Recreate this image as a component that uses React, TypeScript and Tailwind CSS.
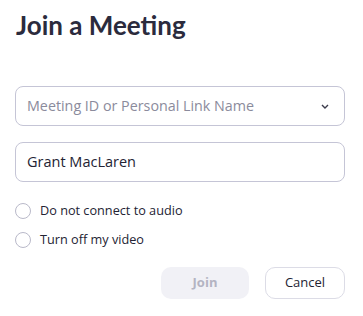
import React from "react";

export default function App() {
  return (
    <div className="w-[363px] h-[316px] bg-white pl-[15px] pr-[18px] pt-[8px]" style={{ fontFamily: '"Segoe UI", "Open Sans", "Noto Sans", sans-serif' }}>
      <h1 className="text-[26px] leading-[34px] font-bold text-[#2b2b3d] pl-[1px]" style={{ fontFamily: 'Lato, sans-serif' }}>
        Join a Meeting
      </h1>
      <div className="mt-[44px] h-[40px] w-[330px] rounded-[8px] border border-[#c5c5d6] flex items-center pl-[11px] pr-[14px]">
        <span className="flex-1 text-[14.3px] text-[#8b8b9c]">Meeting ID or Personal Link Name</span>
        <svg width="8" height="5" viewBox="0 0 8 5" className="mr-[1px]">
          <path d="M1 1 L4 4 L7 1" fill="none" stroke="#3b3b4b" strokeWidth="1.4" />
        </svg>
      </div>
      <div className="mt-[16px] h-[40px] w-[330px] rounded-[8px] border border-[#c5c5d6] flex items-center pl-[11px]">
        <span className="text-[14.5px] text-[#232333]">Grant MacLaren</span>
      </div>
      <div className="mt-[21px] flex items-center gap-[9px] h-[16px]">
        <span className="w-[16px] h-[16px] rounded-full border border-[#b9b9c9] bg-white" />
        <span className="text-[12.7px] text-[#232333]">Do not connect to audio</span>
      </div>
      <div className="mt-[13px] flex items-center gap-[9px] h-[16px]">
        <span className="w-[16px] h-[16px] rounded-full border border-[#b9b9c9] bg-white" />
        <span className="text-[12.7px] text-[#232333]">Turn off my video</span>
      </div>
      <div className="mt-[19px] flex justify-end gap-[16px] w-[330px]">
        <button className="w-[88px] h-[32px] rounded-[10px] bg-[#f1f1f6] text-[#b4b4c2] text-[13px] font-bold">Join</button>
        <button className="w-[80px] h-[32px] rounded-[10px] border border-[#dcdce6] bg-white text-[#232333] text-[13px]">Cancel</button>
      </div>
    </div>
  );
}
